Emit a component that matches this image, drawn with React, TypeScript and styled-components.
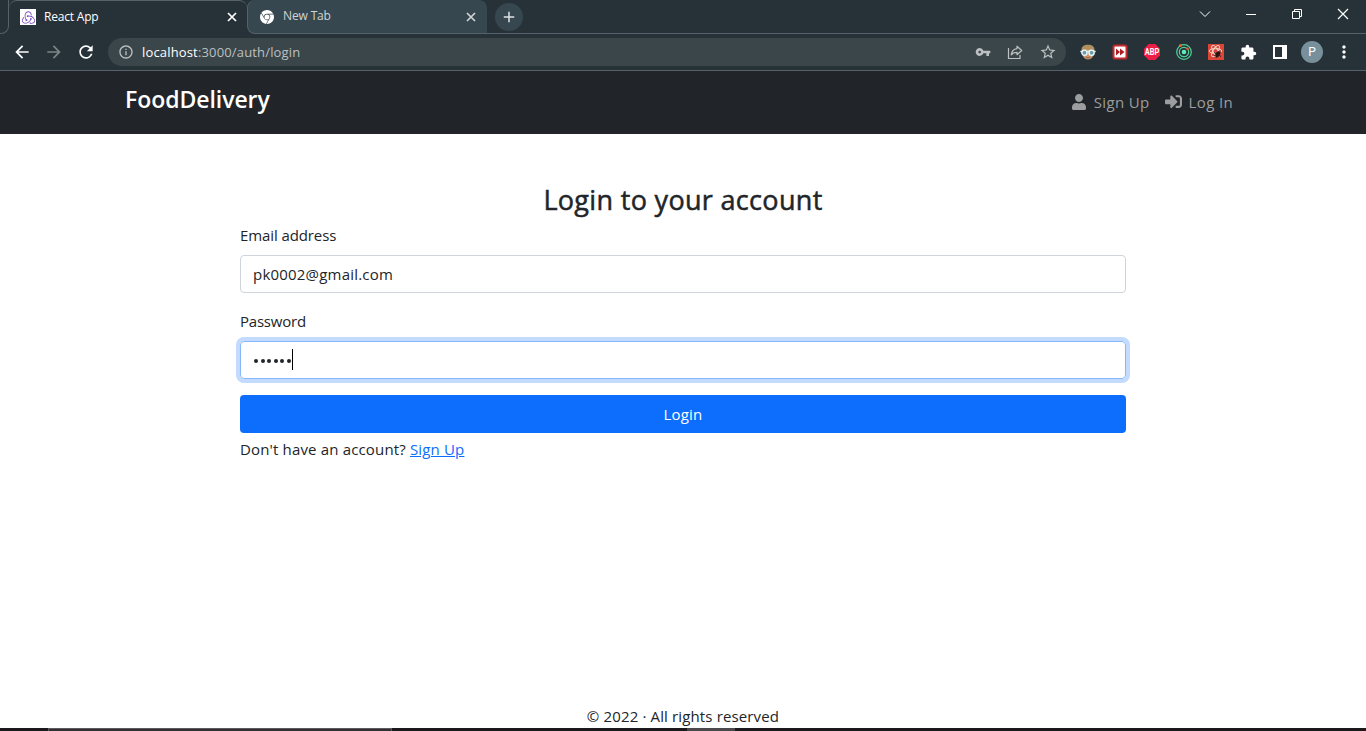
import React from "react";
import styled, { createGlobalStyle } from "styled-components";
import { FaUser, FaSignInAlt } from "react-icons/fa";
import { MdArrowBack, MdArrowForward, MdRefresh, MdInfoOutline, MdVpnKey, MdStarBorder, MdExtension, MdMoreVert, MdAdd } from "react-icons/md";
import { SiRedux, SiGooglechrome } from "react-icons/si";

const line = "#546269";
const frame = "#263238";

const GlobalStyle = createGlobalStyle`
  *, *::before, *::after { box-sizing: border-box; }
  html, body { margin: 0; height: 100%; overflow: hidden; }
  body { font-family: "Open Sans", "Noto Sans", sans-serif; font-size: 15px; line-height: 24px; color: #212529; background: #fff; }
  svg { display: block; flex: none; }
`;

const Screen = styled.div`
  display: flex;
  flex-direction: column;
  width: 1366px;
  height: 731px;
`;

const Label = styled.span<{ $size?: number; $track?: number; $weight?: number }>`
  white-space: nowrap;
  font-size: ${(p) => p.$size ?? 15}px;
  letter-spacing: ${(p) => p.$track ?? 0}px;
  font-weight: ${(p) => p.$weight ?? 400};
`;

const TabStrip = styled.div`
  display: flex;
  height: 34px;
  background: ${frame};
  color: #fff;
`;

const StripStart = styled.div`
  width: 9px;
  border-right: 1px solid ${line};
  border-bottom: 1px solid ${line};
  border-bottom-right-radius: 8px;
`;

const Tab = styled.div<{ $active?: boolean }>`
  display: flex;
  align-items: center;
  height: 34px;
  width: ${(p) => (p.$active ? 238 : 240)}px;
  padding: ${(p) => (p.$active ? "0 9px 1px 11px" : "0 10px 0 12px")};
  background: ${(p) => (p.$active ? frame : "#37474f")};
  color: ${(p) => (p.$active ? "#fff" : "#cfd3d5")};
  border: 0 solid ${line};
  border-width: ${(p) => (p.$active ? "1px 0 0 0" : "0 0 1px 1px")};
  border-radius: ${(p) => (p.$active ? "8px 8px 0 0" : "8px 8px 0 8px")};
`;

const TabTitle = styled(Label)`
  flex: 1;
  margin: 0 0 1px 8px;
`;

const Favicon = styled.span`
  display: grid;
  place-items: center;
  width: 16px;
  height: 16px;
  background: #fff;
  color: #764abc;
`;

const StripRest = styled.div`
  flex: 1;
  display: flex;
  border-bottom: 1px solid ${line};
`;

const NewTab = styled.span`
  display: grid;
  place-items: center;
  width: 28px;
  height: 28px;
  margin: 3px 0 0 8px;
  border-radius: 50%;
  background: #37474f;
  color: #dfe2e3;
`;

const TabSearch = styled.div`
  display: flex;
  align-items: center;
  height: 28px;
  margin: 0 15px 0 auto;
`;

const WindowControls = styled.div`
  display: flex;
  align-items: center;
  justify-content: space-around;
  width: 138px;
  height: 28px;
  margin-left: 2px;
`;

const Toolbar = styled.div`
  display: flex;
  align-items: center;
  height: 37px;
  background: ${frame};
  border-bottom: 1px solid ${line};
  color: #fff;
`;

const NavButtons = styled.div`
  display: flex;
  gap: 12px;
  width: 108px;
  padding-left: 12px;
`;

const Dim = styled.span`
  color: #7d8488;
`;

const AddressBar = styled.div`
  display: flex;
  align-items: center;
  width: 958px;
  height: 28px;
  padding: 0 9px 0 10px;
  border-radius: 14px;
  background: #3a464a;
  color: #bcc0c2;
`;

const Url = styled(Label)`
  flex: 1;
  margin-left: 8px;
  b { font-weight: 400; color: #fff; }
`;

const AddressActions = styled.div`
  display: flex;
  align-items: center;
  gap: 16px;
`;

const Extensions = styled.div`
  display: flex;
  align-items: center;
  flex: 1;
  padding-left: 6px;
`;

const Slot = styled.span`
  display: grid;
  place-items: center;
  width: 32px;
  height: 28px;
`;

const Avatar = styled.span`
  display: grid;
  place-items: center;
  width: 22px;
  height: 22px;
  border-radius: 50%;
  background: #78909c;
  font: 12px/22px Roboto, sans-serif;
`;

const Navbar = styled.header`
  display: flex;
  justify-content: space-between;
  height: 63px;
  padding: 0 133px 0 125px;
  background: #212529;
`;

const Brand = styled.div`
  padding-top: 12px;
  line-height: 32px;
  color: #fff;
`;

const NavLinks = styled.nav`
  display: flex;
  align-items: center;
  height: 61px;
  gap: 15px;
  color: #9b9d9f;
`;

const NavLink = styled.span`
  display: flex;
  align-items: center;
  gap: 7px;
`;

const Main = styled.main`
  flex: 1;
  width: 886px;
  margin: 0 auto;
  padding-top: 47px;
`;

const Heading = styled.h1`
  margin: 0 0 7px;
  height: 35px;
  line-height: 36px;
  font-weight: 400;
  text-align: center;
  -webkit-text-stroke: 0.5px #212529;
`;

const FieldLabel = styled.div`
  height: 32px;
`;

const Field = styled.div<{ $focus?: boolean }>`
  display: flex;
  align-items: center;
  height: 38px;
  margin-bottom: 16px;
  padding: 0 12px;
  border: 1px solid ${(p) => (p.$focus ? "#86b7fe" : "#ced4da")};
  border-radius: 4px;
  box-shadow: ${(p) => (p.$focus ? "0 0 0 4px rgba(13, 110, 253, 0.25)" : "none")};
`;

const Dots = styled.span`
  display: flex;
  gap: 2.500px;
  padding: 2px 0 0 1px;
  i { width: 4px; height: 4px; border-radius: 50%; background: #212529; }
`;

const Caret = styled.span`
  width: 1px;
  height: 21px;
  margin: 0 0 1px 1.500px;
  background: #000;
`;

const LoginButton = styled.button`
  display: block;
  width: 100%;
  height: 38px;
  padding: 0;
  border: 0;
  border-radius: 4px;
  background: #0d6efd;
  color: #fff;
  font: inherit;
`;

const Prompt = styled.div`
  margin-top: 4px;
  a { color: #0d6efd; text-decoration: underline; }
`;

const Footer = styled.footer`
  height: 24px;
  text-align: center;
`;

const Taskbar = styled.div`
  display: flex;
  height: 3px;
  background: #1b191c;
`;

const TaskSearch = styled.div`
  width: 344px;
  margin-left: 48px;
  background: #323033;
  border: 1px solid #5d5b5e;
  border-bottom: 0;
`;

const TaskActive = styled.div`
  width: 48px;
  margin-left: 295px;
  background: #4a484b;
`;

const CloseTab = () => <svg width="12" height="12" viewBox="0 0 12 12" stroke="currentColor" strokeWidth="1.700"><path d="M2 2l8 8M10 2 2 10" /></svg>;
const Chevron = () => <svg width="12" height="12" viewBox="0 0 12 12" fill="none" stroke="#fff"><path d="M1 3.5 6 8.5 11 3.5" /></svg>;
const Minimize = () => <svg width="12" height="12" viewBox="0 0 12 12" stroke="#fff"><path d="M1 6.5h10" /></svg>;
const Restore = () => <svg width="12" height="12" viewBox="0 0 12 12" fill="none" stroke="#fff"><path d="M1.5 3.5h7v7h-7zM3.5 3.5v-2h7v7h-2" /></svg>;
const CloseWindow = () => <svg width="12" height="12" viewBox="0 0 12 12" stroke="#fff" strokeWidth="1.2"><path d="M1 1l10 10M11 1 1 11" /></svg>;

const Share = () => (
  <svg width="16" height="16" viewBox="0 0 16 16" fill="none" stroke="#bcc0c2" strokeWidth="1.2">
    <path d="M1.5 4v10.5h11.5V11" />
    <path d="M10 2.2 14.7 6.5 10 10.7V8.3C7.300 8.300 5.500 9 4.200 10.800 4.700 7.300 6.500 5 10 4.600z" strokeLinejoin="round" />
  </svg>
);

const GlassesFace = () => (
  <svg width="16" height="16" viewBox="0 0 16 16">
    <ellipse cx="8" cy="8.500" rx="6" ry="7" fill="#c89870" />
    <path d="M1.500 7C1 2.500 4 .8 8 .8s7 1.700 6.500 6.200l-2.500-1.500-8-.2z" fill="#b09060" />
    <path d="M5.500 12.500q2.500 1.200 5 0l-1 1.700h-3z" fill="#a4604c" />
    <path d="M.3 7.500h15.400" stroke="#d9eef3" strokeWidth="1.400" />
    <circle cx="4.400" cy="8.800" r="2.600" fill="#6e9fad" stroke="#eefaff" strokeWidth="1.300" />
    <circle cx="11.600" cy="8.800" r="2.600" fill="#6e9fad" stroke="#eefaff" strokeWidth="1.300" />
  </svg>
);

const FastForward = () => (
  <svg width="16" height="16" viewBox="0 0 16 16">
    <rect x=".5" y=".5" width="15" height="15" rx="2.500" fill="#c22a2c" />
    <rect x="2.500" y="2.500" width="11" height="11" rx="1" fill="#fff" />
    <path d="M4 4.500 8 8l-4 3.500zM8 4.500 12.500 8 8 11.500z" fill="#ad1d20" />
  </svg>
);

const AdBlock = () => (
  <svg width="16" height="16" viewBox="0 0 16 16">
    <path d="M4.700 0h6.600L16 4.700v6.600L11.300 16H4.700L0 11.300V4.700z" fill="#ed1e45" />
    <text x="8" y="11" textAnchor="middle" textLength="14.500" lengthAdjust="spacingAndGlyphs" fill="#fff" fontFamily="Roboto, sans-serif" fontWeight="700" fontSize="8.500">ABP</text>
  </svg>
);

const Orbit = () => (
  <svg width="16" height="16" viewBox="0 0 16 16" fill="none" stroke="#4fd39a">
    <circle cx="8" cy="8" r="7.300" strokeWidth="1.200" />
    <circle cx="8" cy="8" r="4.700" strokeWidth="1.200" />
    <circle cx="8" cy="8" r="2.300" fill="#62e8b7" stroke="none" />
    <circle cx="4.300" cy="1.700" r="1.400" fill="#f16a2d" stroke="none" />
    <circle cx="11.500" cy="4.800" r="1.300" fill="#f1532d" stroke="none" />
  </svg>
);

const ReactTool = () => (
  <svg width="16" height="16" viewBox="0 0 16 16">
    <path d="M0 0h16v16H0z" fill="#db4636" />
    <g fill="none" stroke="#fbdcd8" strokeWidth=".9">
      <ellipse cx="7.500" cy="7" rx="6.300" ry="2.400" />
      <ellipse cx="7.500" cy="7" rx="6.300" ry="2.400" transform="rotate(60 7.500 7)" />
      <ellipse cx="7.500" cy="7" rx="6.300" ry="2.400" transform="rotate(120 7.500 7)" />
    </g>
    <ellipse cx="9.800" cy="10.300" rx="2.200" ry="3" fill="#2b1412" transform="rotate(25 9.800 10.300)" />
    <path d="M6 8.500l7 4M6 12l7-4M8 14l3-7" stroke="#2b1412" strokeWidth=".9" />
  </svg>
);

const SidePanel = () => (
  <svg width="14" height="14" viewBox="0 0 14 14"><path fillRule="evenodd" d="M0 0h14v14H0zM2 2v10h7V2z" fill="#fff" /></svg>
);

export default function App() {
  return (
    <Screen>
      <GlobalStyle />
      <TabStrip>
        <StripStart />
        <Tab $active>
          <Favicon><SiRedux size={13} /></Favicon>
          <TabTitle $size={12} $track={-0.2}>React App</TabTitle>
          <CloseTab />
        </Tab>
        <Tab>
          <SiGooglechrome size={14} color="#fff" />
          <TabTitle $size={12} $track={-0.15}>&#8202;New Tab</TabTitle>
          <CloseTab />
        </Tab>
        <StripRest>
          <NewTab><MdAdd size={18} /></NewTab>
          <TabSearch><Chevron /></TabSearch>
          <WindowControls>
            <Minimize />
            <Restore />
            <CloseWindow />
          </WindowControls>
        </StripRest>
      </TabStrip>
      <Toolbar>
        <NavButtons>
          <MdArrowBack size={20} />
          <Dim><MdArrowForward size={20} /></Dim>
          <MdRefresh size={20} />
        </NavButtons>
        <AddressBar>
          <MdInfoOutline size={16} />
          <Url $size={13} $track={0.16}><b>localhost</b>:3000/auth/login</Url>
          <AddressActions>
            <MdVpnKey size={16} />
            <Share />
            <MdStarBorder size={18} />
          </AddressActions>
        </AddressBar>
        <Extensions>
          <Slot><GlassesFace /></Slot>
          <Slot><FastForward /></Slot>
          <Slot><AdBlock /></Slot>
          <Slot><Orbit /></Slot>
          <Slot><ReactTool /></Slot>
          <Slot><MdExtension size={17} /></Slot>
          <Slot><SidePanel /></Slot>
          <Slot><Avatar>P</Avatar></Slot>
          <Slot><MdMoreVert size={20} /></Slot>
        </Extensions>
      </Toolbar>
      <Navbar>
        <Brand><Label $size={23} $weight={600} $track={-0.05}>FoodDelivery</Label></Brand>
        <NavLinks>
          <NavLink><FaUser size={16} /><Label $track={0.35}>Sign Up</Label></NavLink>
          <NavLink><FaSignInAlt size={17} /><Label $track={0.35}>Log In</Label></NavLink>
        </NavLinks>
      </Navbar>
      <Main>
        <Heading><Label $size={27} $track={0.32}>Login to your account</Label></Heading>
        <FieldLabel><Label $track={-0.1}>Email address</Label></FieldLabel>
        <Field><Label $track={0.2}>pk0002@gmail.com</Label></Field>
        <FieldLabel><Label $track={-0.22}>Password</Label></FieldLabel>
        <Field $focus>
          <Dots><i /><i /><i /><i /><i /><i /></Dots>
          <Caret />
        </Field>
        <LoginButton><Label $track={0.2}>Login</Label></LoginButton>
        <Prompt><Label $track={0.16}>Don't have an account? <a>Sign Up</a></Label></Prompt>
      </Main>
      <Footer><Label $track={0.14}>© 2022 · All rights reserved</Label></Footer>
      <Taskbar>
        <TaskSearch />
        <TaskActive />
      </Taskbar>
    </Screen>
  );
}
